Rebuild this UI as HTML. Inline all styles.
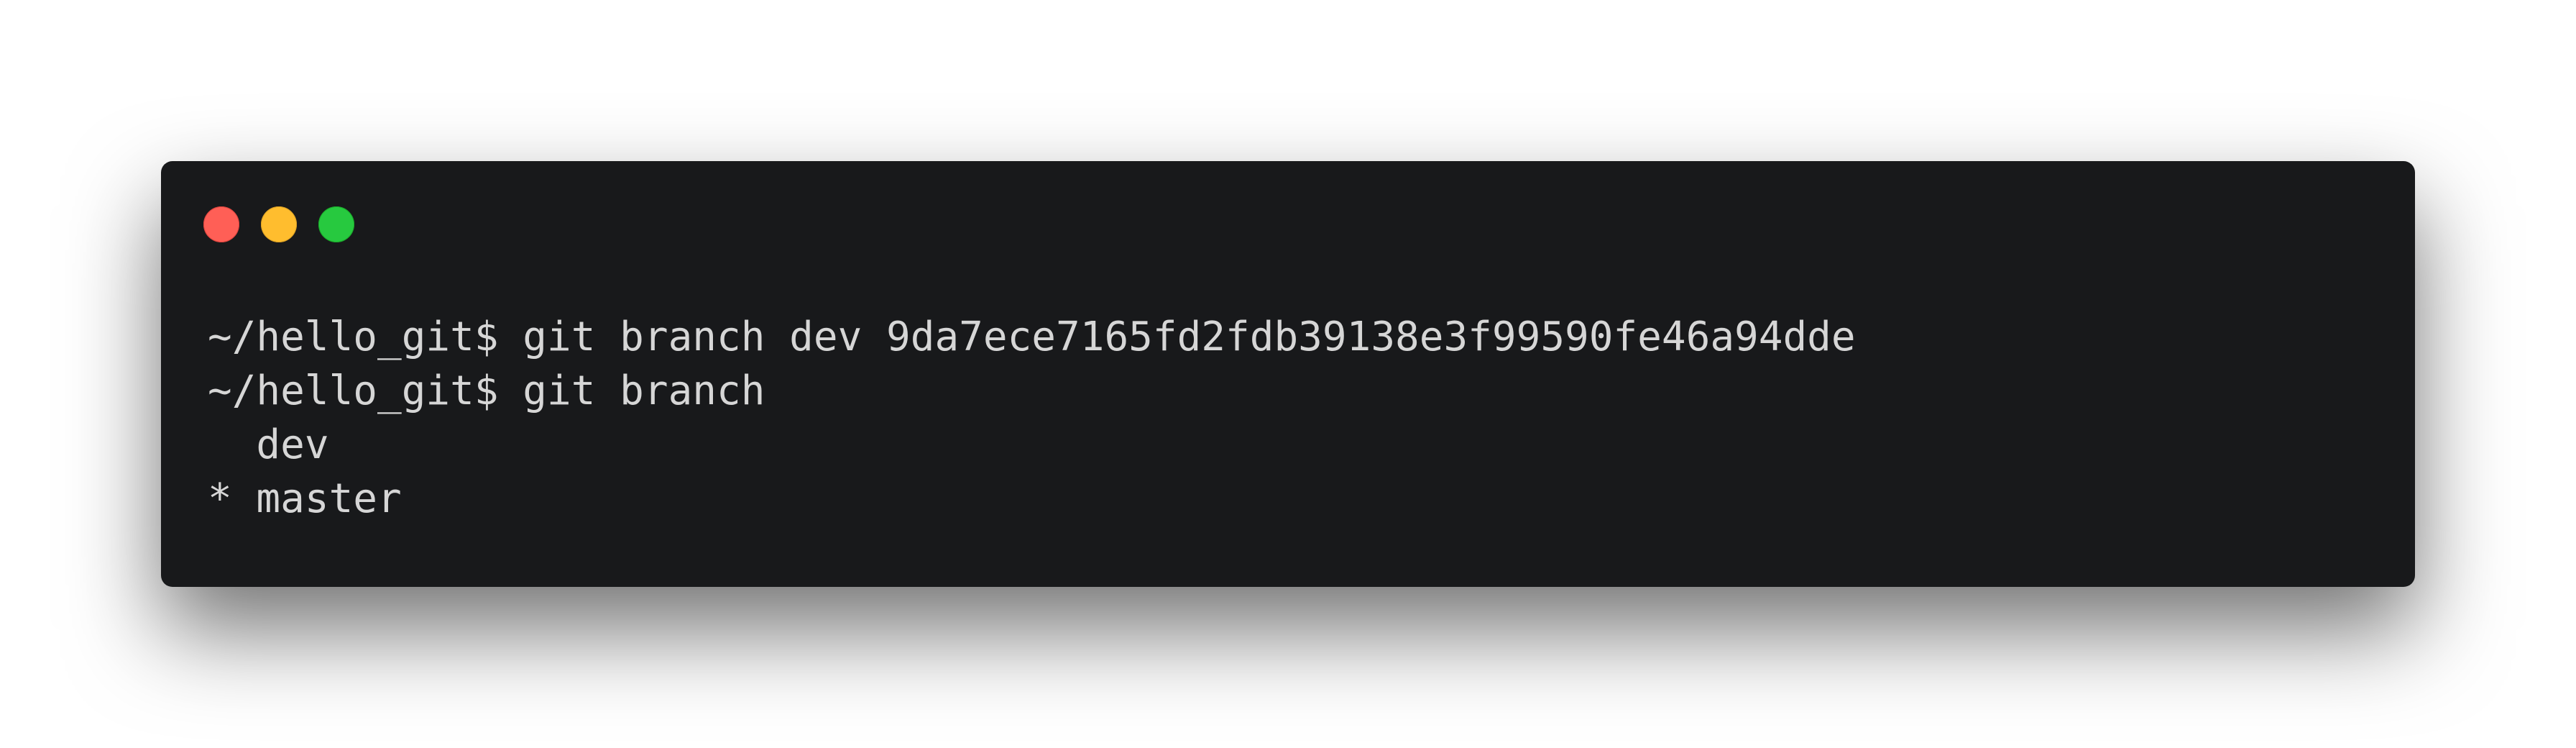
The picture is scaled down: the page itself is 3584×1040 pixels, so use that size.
<!DOCTYPE html>
<html><head><meta charset="utf-8"><style>
html,body{margin:0;padding:0;width:3584px;height:1040px;background:#fff;overflow:hidden}
.win{position:absolute;left:224px;top:224px;width:3136px;height:592px;background:#18191b;border-radius:16px;box-shadow:0 60px 140px rgba(0,0,0,.55)}
.dot{position:absolute;top:63px;width:50px;height:50px;border-radius:50%}
pre{position:absolute;left:65px;top:207px;margin:0;font-family:"DejaVu Sans Mono","Liberation Mono",monospace;font-size:56px;line-height:75px;color:#d6d6d6}
</style></head><body>
<div class="win">
<div class="dot" style="left:59px;background:#ff5f56;box-shadow:inset 0 0 0 1px #e0443e"></div>
<div class="dot" style="left:139px;background:#ffbd2e;box-shadow:inset 0 0 0 1px #dea123"></div>
<div class="dot" style="left:219px;background:#27c93f;box-shadow:inset 0 0 0 1px #1aab29"></div>
<pre>~/hello_git$ git branch dev 9da7ece7165fd2fdb39138e3f99590fe46a94dde
~/hello_git$ git branch
  dev
* master</pre>
</div>
</body></html>
